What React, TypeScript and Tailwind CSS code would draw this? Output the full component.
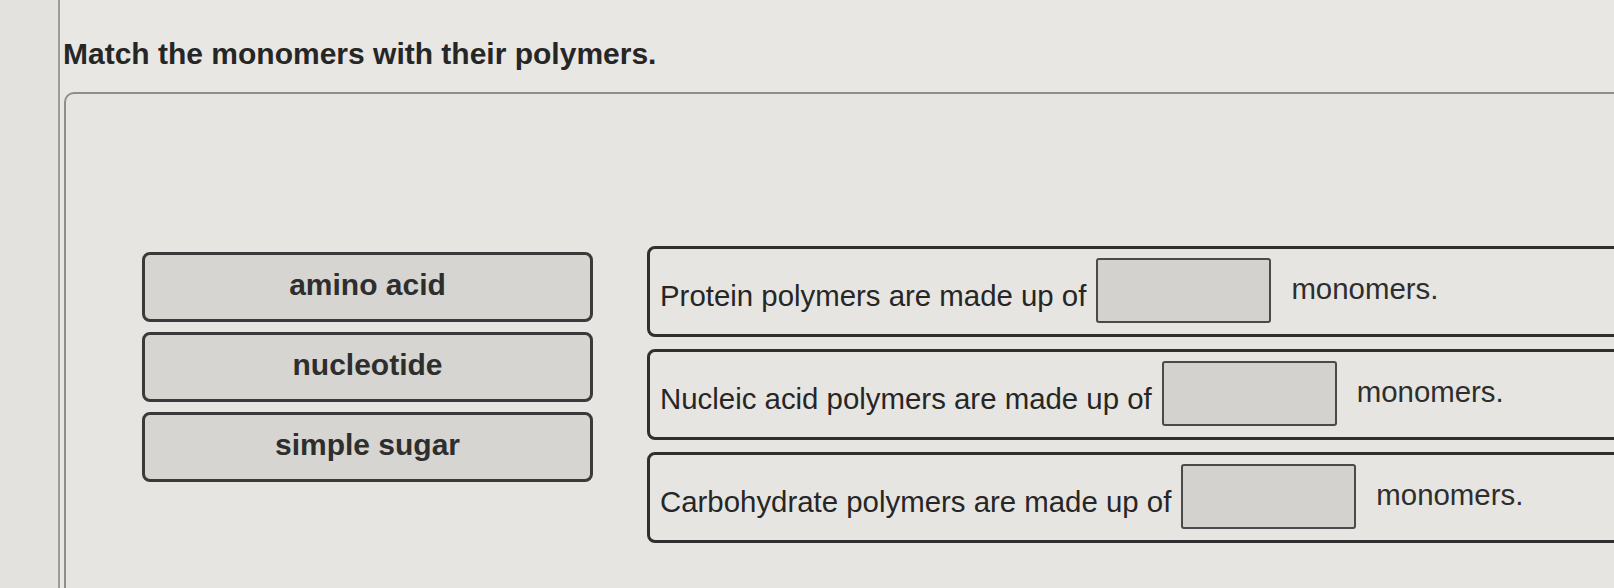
import React from 'react';

const monomers = ['amino acid', 'nucleotide', 'simple sugar'];

const sentences = [
  'Protein polymers are made up of',
  'Nucleic acid polymers are made up of',
  'Carbohydrate polymers are made up of',
];

const App: React.FC = () => {
  return (
    <div
      className="h-[588px] w-[1614px] overflow-hidden bg-[#e6e5e1] flex text-[#262626]"
      style={{ fontFamily: '"Liberation Sans", Arial, sans-serif' }}
    >
      {/* strip left of the page */}
      <div className="w-[58px] shrink-0 bg-[#e3e2de]" />

      <div className="flex-1 flex flex-col border-l-2 border-[#9d9d9a] bg-[#e8e7e3]">
        <h1 className="mt-[39px] pl-[3px] text-[30px] leading-[30px] font-bold text-[#262626]">
          Match the monomers with their polymers.
        </h1>

        <div className="mt-[23px] ml-[4px] flex-1 flex items-start border-l-2 border-t-2 border-[#8e8e8b] rounded-tl-[10px] bg-[#e6e5e1] pt-[152px]">
          {/* draggable answers */}
          <div className="ml-[76px] mt-[6px] flex flex-col gap-[10px]">
            {monomers.map((m) => (
              <div
                key={m}
                className="w-[451px] h-[70px] flex items-center justify-center pb-[6px] border-[3px] border-[#3a3a3a] rounded-[8px] bg-[#d6d5d1] text-[30px] font-bold text-[#2e2e2e]"
              >
                {m}
              </div>
            ))}
          </div>

          {/* sentences with drop targets */}
          <div className="ml-[54px] -mr-[12px] flex-1 flex flex-col gap-[12px]">
            {sentences.map((s) => (
              <div
                key={s}
                className="h-[91px] flex items-center border-[3px] border-[#2f2f2f] rounded-[8px] pl-[10px]"
              >
                <span className="pt-[9px] text-[29.4px] leading-[34px] whitespace-nowrap">{s}</span>
                <div className="ml-[10px] mb-[3px] w-[175px] h-[65px] border-2 border-[#4a4a4a] rounded-[3px] bg-[#d3d2ce]" />
                <span className="ml-[20px] mb-[6px] text-[29.4px] leading-[34px] text-[#2e2e2e]">monomers.</span>
              </div>
            ))}
          </div>
        </div>
      </div>
    </div>
  );
};

export default App;
